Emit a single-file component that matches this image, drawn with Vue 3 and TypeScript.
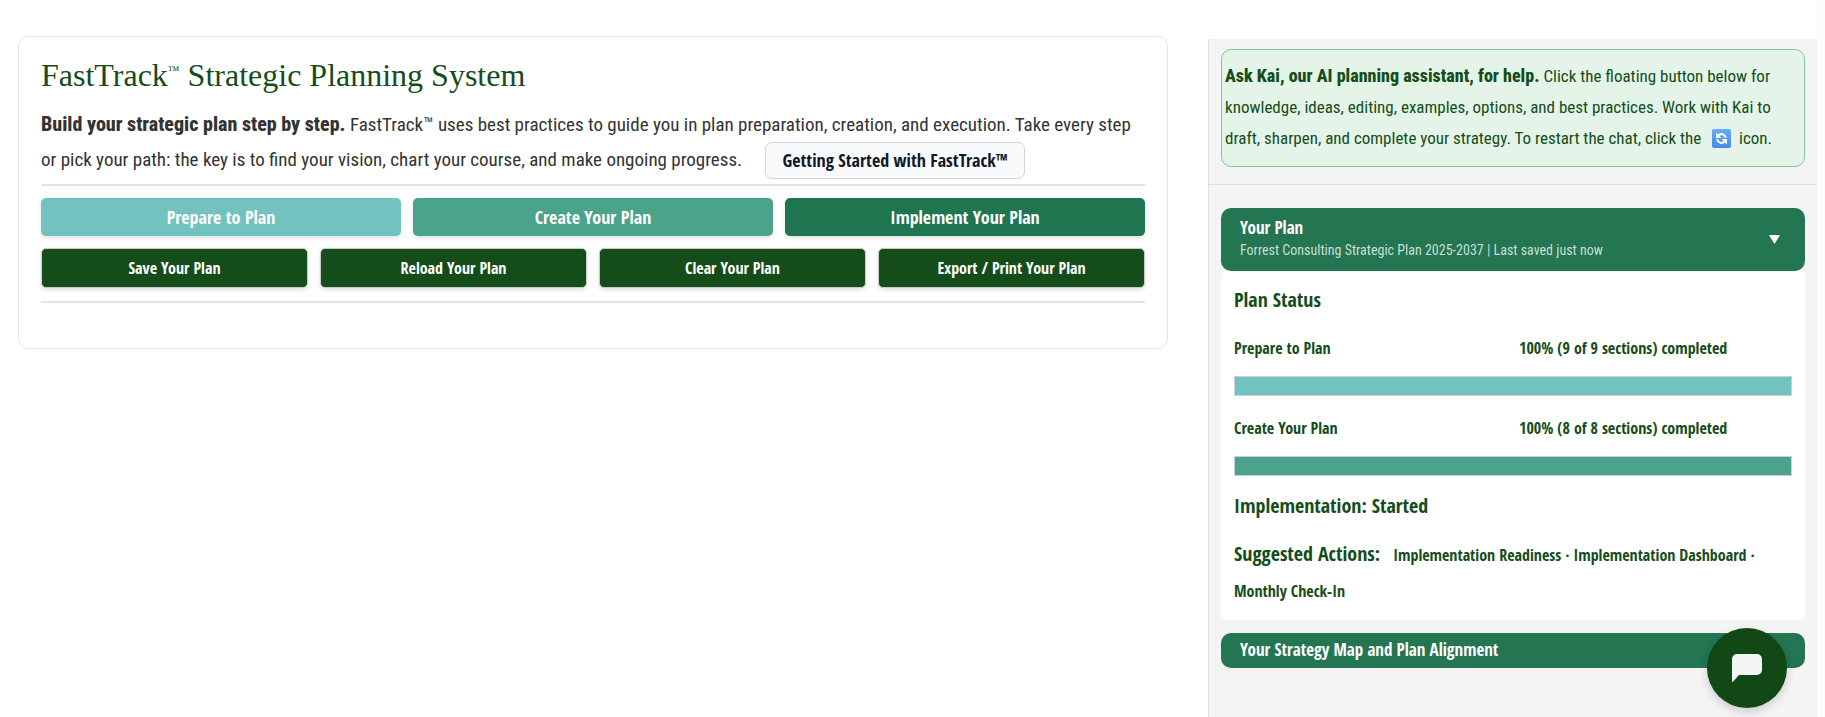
<script setup lang="ts">
import { ref } from 'vue'

interface Action {
  label: string
  tone: string
}

interface Progress {
  id: string
  label: string
  done: number
  total: number
  tone: string
}

const stages: Action[] = [
  { label: 'Prepare to Plan', tone: 'aqua' },
  { label: 'Create Your Plan', tone: 'jade' },
  { label: 'Implement Your Plan', tone: 'pine' },
]

const tools: string[] = ['Save Your Plan', 'Reload Your Plan', 'Clear Your Plan', 'Export / Print Your Plan']

const progress: Progress[] = [
  { id: 'prepare', label: 'Prepare to Plan', done: 9, total: 9, tone: 'aqua' },
  { id: 'create', label: 'Create Your Plan', done: 8, total: 8, tone: 'jade' },
]

const suggestions: string[] = ['Implementation Readiness', 'Implementation Dashboard', 'Monthly Check-In']

const planOpen = ref(true)
const mapOpen = ref(false)

const percent = (p: Progress): number => Math.round((p.done / p.total) * 100)
</script>

<template>
  <div class="page">
    <main class="card">
      <h1>FastTrack<sup>™</sup> Strategic Planning System</h1>
      <p class="intro">
        <strong>Build your strategic plan step by step.</strong> FastTrack™ uses best practices to guide you in plan
        preparation, creation, and execution. Take every step or pick your path: the key is to find your vision, chart
        your course, and make ongoing progress.
        <button type="button" class="start">Getting Started with FastTrack™</button>
      </p>
      <hr class="rule" />
      <nav class="stages" aria-label="Planning stages">
        <button v-for="s in stages" :key="s.label" type="button" class="stage" :class="s.tone">{{ s.label }}</button>
      </nav>
      <div class="tools">
        <button v-for="t in tools" :key="t" type="button" class="tool">{{ t }}</button>
      </div>
      <hr class="rule" />
    </main>

    <aside class="side">
      <section class="help">
        <p class="tip">
          <strong>Ask Kai, our AI planning assistant, for help.</strong> Click the floating button below for knowledge,
          ideas, editing, examples, options, and best practices. Work with Kai to draft, sharpen, and complete your
          strategy. To restart the chat, click the
          <svg class="refresh" viewBox="0 0 19 19" role="img" aria-label="restart">
            <defs>
              <linearGradient id="refresh-fill" x1="0" y1="0" x2="0" y2="1">
                <stop offset="0" stop-color="#5fb0fb" />
                <stop offset="1" stop-color="#4a88e6" />
              </linearGradient>
            </defs>
            <rect width="19" height="19" rx="2" fill="url(#refresh-fill)" />
            <path d="M6.500 6.200a4.500 4.500 0 0 1 7.300 2.600M12.500 12.800a4.500 4.500 0 0 1-7.300-2.600" fill="none" stroke="#fff" stroke-width="2" />
            <path d="M4 3.500v5.500h5.500zM15 15.500v-5.500H9.500z" fill="#fff" />
          </svg>
          icon.
        </p>
      </section>

      <section class="panels">
        <button type="button" class="bar" :aria-expanded="planOpen" aria-controls="plan-panel" @click="planOpen = !planOpen">
          <span class="bar-text">
            <span class="bar-title">Your Plan</span>
            <span class="bar-sub">Forrest Consulting Strategic Plan 2025-2037 | Last saved just now</span>
          </span>
          <svg class="arrow" viewBox="0 0 11 9" aria-hidden="true"><path d="M0 0h11L5.500 9z" fill="#fff" /></svg>
        </button>
        <div v-show="planOpen" id="plan-panel" class="panel">
          <h2>Plan Status</h2>
          <div v-for="p in progress" :key="p.id" class="status">
            <div class="status-row">
              <span :id="p.id">{{ p.label }}</span>
              <span>{{ percent(p) }}% ({{ p.done }} of {{ p.total }} sections) completed</span>
            </div>
            <div class="track" role="progressbar" :aria-labelledby="p.id" :aria-valuenow="percent(p)" aria-valuemin="0" aria-valuemax="100">
              <div class="fill" :class="p.tone" :style="{ width: percent(p) + '%' }"></div>
            </div>
          </div>
          <h2 class="impl">Implementation: Started</h2>
          <p class="suggested">
            <span class="suggested-label">Suggested Actions:</span>
            <template v-for="(s, i) in suggestions" :key="s"><template v-if="i > 0"> · </template><a href="#">{{ s }}</a></template>
          </p>
        </div>
        <button type="button" class="bar map" :aria-expanded="mapOpen" @click="mapOpen = !mapOpen">
          <span class="bar-title">Your Strategy Map and Plan Alignment</span>
          <svg class="arrow" viewBox="0 0 11 9" aria-hidden="true"><path d="M0 0h11L5.500 9z" fill="#fff" /></svg>
        </button>
      </section>
    </aside>

    <button type="button" class="chat" aria-label="Open chat">
      <svg viewBox="0 0 30 28" aria-hidden="true">
        <path d="M5 0h20a5 5 0 0 1 5 5v11a5 5 0 0 1-5 5H7L1.200 27.500Q0 28.500 0 27V5a5 5 0 0 1 5-5z" fill="#f4f5f5" />
      </svg>
    </button>
  </div>
</template>

<style>
body {
  margin: 0;
  background: #fff;
}
</style>

<style scoped>
.page {
  box-sizing: border-box;
  min-height: 100vh;
  display: grid;
  grid-template-columns: minmax(0, 1150fr) minmax(0, 609fr);
  column-gap: 40px;
  padding-left: 18px;
  border-right: 8px solid #fcfcfc;
  font-family: "Roboto Condensed", "Open Sans", sans-serif;
  color: #333;
}

button,
h2,
.status-row,
.suggested {
  font-family: "Open Sans Condensed", "Open Sans", sans-serif;
  font-weight: 700;
}

button {
  cursor: pointer;
}

strong {
  font-weight: 800;
  line-height: 1;
}

.card {
  align-self: start;
  margin-top: 36px;
  padding: 14px 22px 45px;
  border: 1px solid #e5e5e8;
  border-radius: 10px;
  background: #fff;
}

h1 {
  margin: 0;
  font: 400 32px/48px "Liberation Serif", serif;
  color: #154d1a;
}

h1 sup {
  font-size: 12px;
  line-height: 12px;
  vertical-align: 12px;
}

.intro {
  margin: 8px 0 7px;
  font-size: 19px;
  line-height: 35px;
}

.intro strong {
  font-size: 20px;
}

.start {
  box-sizing: border-box;
  height: 37px;
  margin: -2px 0 -2px 19px;
  padding: 0 16px;
  border: 1px solid #d1d5db;
  border-radius: 7px;
  background: #f9fafc;
  color: #111827;
  font-size: 18px;
  line-height: 33px;
  vertical-align: middle;
}

.rule {
  height: 2px;
  margin: 0;
  border: 0;
  background: #e2e3e7;
}

.stages,
.tools {
  display: grid;
  gap: 12px;
}

.stages {
  grid-template-columns: repeat(3, 1fr);
  margin: 12px 0;
}

.tools {
  grid-template-columns: repeat(4, 1fr);
  margin-bottom: 13px;
}

.stage,
.tool {
  padding: 0;
  border: 0;
  border-radius: 5px;
  box-shadow: 0 2px 4px rgba(0, 0, 0, 0.12);
  color: #fff;
}

.stage {
  height: 38px;
  font-size: 18px;
}

.tool {
  height: 40px;
  border: 1px solid #ccc;
  background: #154d1a;
  font-size: 16px;
}

.aqua {
  background: #72c2bf;
}

.jade {
  background: #4ba38b;
}

.pine {
  background: #207551;
}

.side {
  margin-top: 39px;
  border-left: 1px solid #ddd;
  background: #f4f4f4;
  color: #154d1a;
}

.help {
  padding: 10px 12px 17px;
  border-bottom: 1px solid #ddd;
}

.tip {
  margin: 0;
  padding: 11px 3px 12px;
  border: 1px solid #83c795;
  border-radius: 10px;
  background: #e4f4e8;
  font-size: 17px;
  line-height: 31px;
}

.tip strong {
  font-size: 18px;
}

.refresh {
  width: 19px;
  height: 19px;
  margin: 0 4px 0 7px;
  vertical-align: -4px;
}

.panels {
  padding: 23px 12px;
}

.bar {
  display: flex;
  align-items: center;
  justify-content: space-between;
  width: 100%;
  padding: 8px 25px 9px 19px;
  border: 0;
  border-radius: 10px;
  background: #247551;
  color: #fff;
  text-align: left;
}

.bar-text {
  display: grid;
}

.bar-title {
  font-size: 17px;
  line-height: 23px;
}

.bar-sub {
  font-family: "Roboto Condensed", "Open Sans", sans-serif;
  font-size: 14px;
  font-weight: 400;
  line-height: 23px;
  color: #c8dfd3;
}

.arrow {
  width: 11px;
  height: 9px;
}

.map {
  margin-top: 13px;
  padding-top: 5px;
  padding-bottom: 7px;
}

.panel {
  padding: 11px 13px;
  border-radius: 5px;
  background: #fff;
}

h2 {
  margin: 0 0 12px;
  font-size: 20px;
  line-height: 36px;
}

.status {
  margin-bottom: 14px;
}

.status-row {
  display: grid;
  grid-template-columns: 1fr 1fr;
  gap: 12px;
  margin-bottom: 10px;
  font-size: 16px;
  line-height: 36px;
}

.track {
  box-sizing: border-box;
  height: 20px;
  border: 1px solid #cbd0d6;
  background: #fff;
}

.fill {
  height: 100%;
}

.impl {
  margin-top: -2px;
}

.suggested {
  margin: 0;
  font-size: 16px;
  line-height: 36px;
}

.suggested-label {
  margin-right: 13px;
  font-size: 20px;
}

.suggested a {
  color: inherit;
  text-decoration: none;
}

.chat {
  position: fixed;
  right: 38px;
  bottom: 9px;
  display: grid;
  place-items: center;
  width: 80px;
  height: 80px;
  padding: 0;
  border: 0;
  border-radius: 50%;
  background: #124716;
  box-shadow: 0 4px 10px rgba(0, 0, 0, 0.16);
}

.chat svg {
  width: 30px;
  height: 28px;
}
</style>
